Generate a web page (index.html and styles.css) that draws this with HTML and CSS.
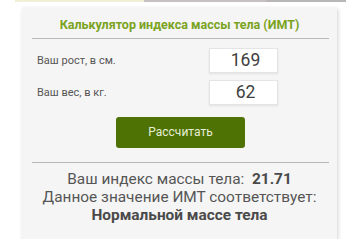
FILE: index.html
```html
<!DOCTYPE html>
<html lang="ru">
<head>
<meta charset="utf-8">
<link rel="stylesheet" href="styles.css">
</head>
<body>
<div class="strip"><span class="s1"></span><span class="s2"></span><span class="s3"></span></div>
<div class="card">
  <div class="title">Калькулятор индекса массы тела (ИМТ)</div>
  <div class="rule"></div>
  <div class="form">
    <div class="label">Ваш рост, в см.</div>
    <div class="input">169</div>
    <div class="label">Ваш вес, в кг.</div>
    <div class="input">62</div>
  </div>
  <div class="btn-wrap"><div class="btn">Рассчитать</div></div>
  <div class="rule rule2"></div>
  <div class="result">
    <div>Ваш индекс массы тела:&nbsp; <b>21.71</b></div>
    <div>Данное значение ИМТ соответствует:</div>
    <div><b>Нормальной массе тела</b></div>
  </div>
</div>
</body>
</html>
```
FILE: styles.css
```css
html, body {
  margin: 0;
  padding: 0;
  background: #ffffff;
  font-family: Roboto, "Noto Sans", sans-serif;
}
.strip {
  display: flex;
  height: 2px;
  margin: 0 14px 0 15px;
}
.s1 { flex: 129; background: #f1efd6; }
.s2 { flex: 122; background: #c7c0c2; }
.s3 { flex: 80; background: #b9b6b8; }
.card {
  margin: 5px 0 0 22px;
  width: 315px;
  background: #f5f5f5;
  box-shadow: 1px 2px 4px rgba(0,0,0,0.18);
  padding: 9px 0 15px;
}
.title {
  text-align: center;
  color: #7ba322;
  font-weight: bold;
  font-size: 12.5px;
  line-height: 18px;
}
.rule {
  height: 1px;
  background: #b8b8b8;
  margin: 4px 8px 9px 10px;
}
.form {
  display: grid;
  grid-template-columns: 1fr 69px;
  row-gap: 7px;
  padding: 0 59px 0 15px;
  align-items: center;
}
.label {
  font-size: 11px;
  color: #555555;
}
.input {
  height: 23px;
  background: #ffffff;
  border: 1px solid #e4e4e4;
  box-shadow: 0 1px 2px rgba(0,0,0,0.08);
  font-size: 17.5px;
  line-height: 23px;
  color: #404040;
  text-align: center;
  padding-left: 4px;
}
.btn-wrap {
  display: flex;
  justify-content: center;
  margin-top: 12px;
  padding-left: 2px;
}
.btn {
  width: 129px;
  height: 31px;
  background: #4f7205;
  border-radius: 3px;
  color: #e6efd3;
  font-size: 12px;
  line-height: 31px;
  text-align: center;
}
.rule2 {
  margin: 14px 8px 7px 10px;
}
.result {
  text-align: center;
  font-size: 15.4px;
  line-height: 18px;
  color: #555555;
}
.result b {
  color: #4a4a4a;
}
```
